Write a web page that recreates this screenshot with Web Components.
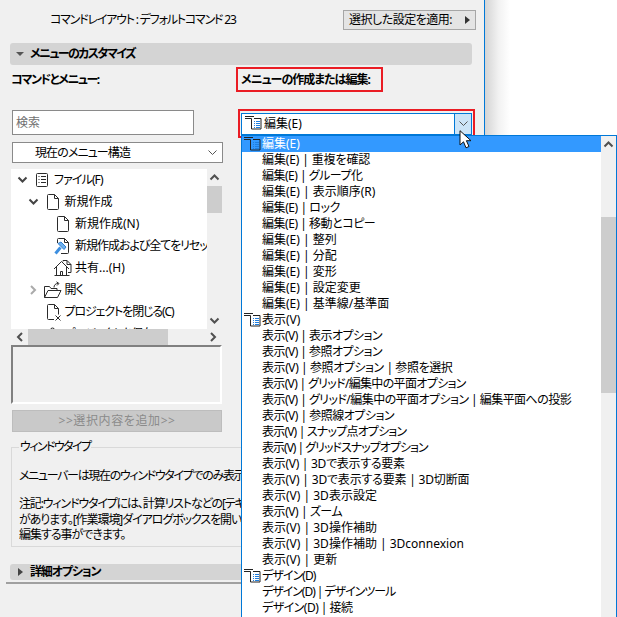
<!DOCTYPE html>
<html lang="ja">
<head>
<meta charset="utf-8">
<title>メニューのカスタマイズ</title>
<style>
html,body{margin:0;padding:0;background:#fff;overflow:hidden}
body{font:12px/16px "Noto Sans","Noto Sans CJK JP",sans-serif;color:#000;font-feature-settings:"palt"}
</style>
</head>
<body>
<x-app></x-app>
<script>
const FONT = `"Noto Sans","Noto Sans CJK JP",sans-serif`;
/* The reference face has narrower kana: tighten a line in proportion to its kana. */
function fit(text){
  const t = text.trim(), n = (t.match(/[\u3040-\u30ff]/g)||[]).length;
  return t.length ? (-1.6*n/t.length).toFixed(3)+'px' : '0';
}
const ICONS = {
  doc:`<svg width="14" height="18" viewBox="0 0 14 18" fill="none" stroke="#2b2b2b"><path d="M1.5 2.5a1 1 0 0 1 1-1h6l4 4v10a1 1 0 0 1-1 1h-9a1 1 0 0 1-1-1z"/><path d="M8.5 1.5v4h4"/></svg>`,
  list:`<svg width="14" height="16" viewBox="0 0 14 16" fill="none" stroke="#2b2b2b"><rect x="1.5" y="1.5" width="11" height="13" rx="1"/><path d="M3.5 4.5h1M6 4.5h5M3.5 7.5h1M6 7.5h5M3.5 10.5h1M6 10.5h5"/></svg>`,
  hammer:`<svg width="16" height="18" viewBox="0 0 16 18" fill="none" stroke="#2b2b2b"><path d="M3.5 6V2.5a1 1 0 0 1 1-1h6l4 4v10a1 1 0 0 1-1 1H7"/><path d="M10.500 1.500v4h4"/><path d="M1.500 16.500l5-6" stroke="#3d8fe0" stroke-width="3"/><path d="M4 6.500l3-1.500 5 5-2 2.500z" fill="#6fb1ee" stroke="#2f7fd0"/></svg>`,
  house:`<svg width="19" height="18" viewBox="0 0 19 18" fill="none" stroke="#2b2b2b"><path d="M10 2.500V1.500h4l4 4v8h-3"/><path d="M14 1.500v4h4"/><path d="M1 10L8.500 2.500 16 10"/><path d="M3.500 8v8.500h10V8"/><path d="M1.500 16.500h15M7.500 16.500v-4h2v4"/></svg>`,
  folder:`<svg width="20" height="18" viewBox="0 0 20 18" fill="none" stroke="#2b2b2b"><path d="M1.500 16.500v-11h5l1.500 2h6v2"/><path d="M1.500 16.500h13l3.500-7H5z"/><path d="M11 6.500c0-2.500 1.500-4 4-4"/><path d="M13.500.8l2.500 1.700-2 2"/></svg>`,
  close:`<svg width="16" height="18" viewBox="0 0 16 18" fill="none" stroke="#2b2b2b"><path d="M8 16.500H2.500a1 1 0 0 1-1-1v-13a1 1 0 0 1 1-1h6l4 4v6"/><path d="M8.500 1.500v4h4"/><path d="M9.500 12.500l5 5M14.500 12.500l-5 5"/></svg>`,
  save:`<svg width="14" height="18" viewBox="0 0 14 18" fill="none" stroke="#2b2b2b"><path d="M4.500 5a2 2 0 0 1 4 0"/></svg>`,
  group:`<svg width="18" height="15" viewBox="0 0 18 15" fill="none"><path d="M1 .5h9M1 2.500h6.500v10.500h9.500V2.500H10" stroke="#222"/><path d="M10 5.500h1M12 5.500h4M10 7.500h1M12 7.500h4M10 9.500h1M12 9.500h4M10 11.500h1M12 11.500h4" stroke="#1f7fe0"/></svg>`
};
const CHEV = (c,d) => `<svg width="11" height="8" viewBox="0 0 11 8" fill="none" stroke="${c}" stroke-width="${d||1}"><path d="M1.500 1.500l4 4 4-4"/></svg>`;

class Base extends HTMLElement {
  constructor(){ super(); this.attachShadow({mode:'open'}); }
  connectedCallback(){ this.shadowRoot.innerHTML = this.render(); }
}
function def(name, fn){ customElements.define(name, class extends Base { render(){ return fn(this); } }); }

def('x-bar', el => {
  const open = el.hasAttribute('open');
  return `<style>:host{display:flex;align-items:center;background:#d4d4d4;border-radius:3px;box-sizing:border-box;
    font-weight:700;height:var(--h,22px);margin:var(--m,0);white-space:nowrap}
    i{display:block;width:0;height:0}
    .o{margin-left:6px;margin-right:6px;border-left:4px solid transparent;border-right:4px solid transparent;border-top:4px solid #555}
    .c{margin-left:8px;margin-right:7px;border-top:4px solid transparent;border-bottom:4px solid transparent;border-left:5px solid #444}</style>
    <i class="${open?'o':'c'}"></i><slot></slot>`;
});
def('x-red', el => `<style>:host{display:flex;align-items:center;box-sizing:border-box;border:2px solid #ea1c24;height:var(--h);width:var(--w);margin:var(--m,0);padding:var(--p,0);white-space:nowrap}</style><slot></slot>`);
def('x-input', el => `<style>:host{display:flex;align-items:center;box-sizing:border-box;width:182px;height:25px;border:1px solid #8a8a8a;background:#fff;color:#6f6f6f;padding-left:3px;margin-left:1px}</style><slot></slot>`);
def('x-select', el => `<style>:host{display:flex;align-items:center;justify-content:space-between;box-sizing:border-box;width:211px;height:21px;border:1px solid #8a8a8a;background:#fff;padding:0 4px 0 22px;margin:7px 0 0 1px}</style><slot></slot>${CHEV('#555')}`);
def('x-combo', el => `<style>:host{display:flex;align-items:stretch;box-sizing:border-box;width:231px;height:22px;border:1px solid #0078d7;background:#fff;flex:none}
  .i{display:flex;align-items:center;padding-left:2px;width:20px;flex:none}
  .t{flex:1;display:flex;align-items:center}
  .b{width:16px;background:#cce4f7;border-left:1px solid #0078d7;display:flex;align-items:center;justify-content:center}</style>
  <span class="i">${ICONS.group}</span><span class="t"><slot></slot></span><span class="b">${CHEV('#555')}</span>`);
def('x-vscroll', el => `<style>:host{display:flex;flex-direction:column;flex:none;width:15px;background:#f0f0f0}
  .a{height:17px;display:flex;align-items:center;justify-content:center;flex:none}
  .u{transform:rotate(180deg)} .s{height:var(--before,0);flex:none} .t{height:var(--thumb);background:#cdcdcd;flex:none} .f{flex:1}</style>
  <span class="a u">${CHEV('#505050',2)}</span><span class="s"></span><span class="t"></span><span class="f"></span>
  ${el.hasAttribute('noend')?'':`<span class="a">${CHEV('#505050',2)}</span>`}`);
def('x-hscroll', el => `<style>:host{display:flex;height:16px;background:#f0f0f0;width:211px}
  .a{width:17px;display:flex;align-items:center;justify-content:center;flex:none}
  .l{transform:rotate(90deg)} .r{transform:rotate(-90deg)} .t{width:140px;background:#cdcdcd} .f{flex:1}</style>
  <span class="a l">${CHEV('#505050',2)}</span><span class="t"></span><span class="f"></span><span class="a r">${CHEV('#505050',2)}</span>`);
def('x-tree-row', el => {
  const lv = +el.getAttribute('level')||0, ch = el.getAttribute('chevron'), ic = el.getAttribute('icon');
  const shift = +el.getAttribute('shift')||0;
  const pad = 5 + lv*10.5;
  return `<style>:host{display:flex;align-items:center;height:22px;white-space:nowrap;padding-left:${pad}px;flex:none}
    .c{width:13px;display:flex;justify-content:center;flex:none}
    .i{width:${19+shift}px;margin-left:${6-shift}px;display:flex;justify-content:flex-start;align-items:center;flex:none}
    .r{transform:rotate(-90deg)}</style>
    <span class="c ${ch==='closed'?'r':''}">${ch? CHEV(ch==='closed'?'#aaa':'#444',2):''}</span>
    <span class="i">${ICONS[ic]||''}</span><slot></slot>`;
});
def('x-tree', el => `<style>:host{display:flex;flex-direction:column;width:211px;margin:6px 0 0}
  .m{display:flex;height:160px} .b{width:196px;background:#fff;overflow:hidden;display:flex;flex-direction:column}</style>
  <div class="m"><div class="b"><slot></slot></div><x-vscroll style="--thumb:27px"></x-vscroll></div><x-hscroll></x-hscroll>`);
def('x-sunken', el => `<style>:host{display:block;box-sizing:border-box;width:211px;height:59px;border:2px solid;border-color:#808080 #fff #fff #808080;background:#f0f0f0}</style>`);
def('x-add-button', el => `<style>:host{display:flex;align-items:center;justify-content:center;box-sizing:border-box;width:210px;height:22px;background:#c9c9c9;color:#8b8b8b;margin:6px 0 0 1px;border:1px solid #bdbdbd;letter-spacing:.6px}</style><slot></slot>`);
def('x-group', el => `<style>:host{display:block;margin:7px 12px 0 11px}
  fieldset{margin:0;border:1px solid #d9d9d9;padding:5px 8px 5px 7px;min-width:0;height:108px;box-sizing:border-box}
  legend{padding:0 1px;margin:0;line-height:16px;white-space:nowrap;letter-spacing:${fit(el.getAttribute('label'))}}
  .b{white-space:nowrap;width:222px;overflow:hidden}</style>
  <fieldset><legend>${el.getAttribute('label')}</legend><div class="b"><slot></slot></div></fieldset>`);
def('x-apply', el => `<style>:host{display:flex;align-items:center;justify-content:space-between;box-sizing:border-box;width:133px;height:20px;background:#e4e4e4;border:1px solid #a6a6a6;padding:0 5px;white-space:nowrap}
  i{width:0;height:0;border-top:4px solid transparent;border-bottom:4px solid transparent;border-left:5px solid #333}</style><slot></slot><i></i>`);
def('x-menu-row', el => {
  const sel = el.hasAttribute('selected'), gr = el.hasAttribute('group');
  return `<style>:host{display:flex;align-items:center;height:16px;white-space:nowrap;flex:none;background:${sel?'#3399ff':'transparent'};color:${sel?'#fff':'#000'}}
    .i{width:20px;flex:none;display:flex;align-items:center;padding-left:1px;box-sizing:border-box}</style>
    <span class="i">${gr?ICONS.group:''}</span><slot></slot>`;
});
def('x-menu', el => `<style>:host{position:absolute;left:241px;top:135px;width:376px;height:482px;box-sizing:border-box;border:1px solid #0078d7;border-bottom:0;background:#fff;display:flex}
  .l{flex:1;overflow:hidden;display:flex;flex-direction:column;min-width:0}</style>
  <div class="l"><slot></slot></div><x-vscroll noend style="--before:64px;--thumb:176px"></x-vscroll>`);
def('x-cursor', el => `<style>:host{position:absolute;left:459px;top:130px;width:16px;height:20px;display:block}</style>
  <svg width="16" height="20" viewBox="0 0 16 20"><path d="M1 .7V15l3.500-3.200 2.500 6 3-1.300-2.600-5.800H12z" fill="#fff" stroke="#111" stroke-linejoin="round"/></svg>`);

const MENU = [
 ['編集(E)','gs'],['編集(E) | 重複を確認'],['編集(E) | グループ化'],['編集(E) | 表示順序(R)'],['編集(E) | ロック'],['編集(E) | 移動とコピー'],['編集(E) | 整列'],['編集(E) | 分配'],['編集(E) | 変形'],['編集(E) | 設定変更'],['編集(E) | 基準線/基準面'],
 ['表示(V)','g'],['表示(V) | 表示オプション'],['表示(V) | 参照オプション'],['表示(V) | 参照オプション | 参照を選択'],['表示(V) | グリッド/編集中の平面オプション'],['表示(V) | グリッド/編集中の平面オプション | 編集平面への投影'],['表示(V) | 参照線オプション'],['表示(V) | スナップ点オプション'],['表示(V) | グリッドスナップオプション'],['表示(V) | 3Dで表示する要素'],['表示(V) | 3Dで表示する要素 | 3D切断面'],['表示(V) | 3D表示設定'],['表示(V) | ズーム'],['表示(V) | 3D操作補助'],['表示(V) | 3D操作補助 | 3Dconnexion'],['表示(V) | 更新'],
 ['デザイン(D)','g'],['デザイン(D) | デザインツール'],['デザイン(D) | 接続']
];
const menuHtml = MENU.map(([t,f='']) => `<x-menu-row fit ${f.includes('g')?'group':''} ${f.includes('s')?'selected':''}>${t}</x-menu-row>`).join('');

customElements.define('x-app', class extends HTMLElement {
  constructor(){ super(); this.attachShadow({mode:'open'}); }
  connectedCallback(){
    this.shadowRoot.innerHTML = `<style>
      :host{display:flex;position:relative;width:617px;height:617px;overflow:hidden;background:#fff;
        font:12px/16px ${FONT};font-feature-settings:"palt";color:#000}
      .dlg{width:485px;height:617px;box-sizing:border-box;flex:none;background:#f0f0f0;border-right:1px solid #0078d7;overflow:hidden}
      .shade{width:25px;height:617px;background:linear-gradient(90deg,#d4d4d4,#f2f2f2 55%,#fff)}
      .top{display:flex;align-items:center;justify-content:space-between;height:20px;padding:10px 8px 13px 50px;white-space:nowrap}
      .cols{display:flex}
      .left{width:225px;margin-left:11px;flex:none}
      .right{flex:none}
      .lab{font-weight:700;white-space:nowrap}
      .l1{height:28px;box-sizing:border-box;padding-top:1px;display:flex;align-items:center;margin-bottom:17px}
      .rule{height:2px;background:#a0a0a0;margin:2px 0 0 6px}
      .p1{margin-top:8px}
      .p2{margin-top:12px}
      .ln{height:15.5px;line-height:15.5px}
    </style>
    <div class="dlg">
      <div class="top"><span fit>コマンドレイアウト : デフォルトコマンド 23</span><x-apply fit>選択した設定を適用:</x-apply></div>
      <x-bar fit open style="--m:0 12px 0 10px">メニューのカスタマイズ</x-bar>
      <div class="cols">
        <div class="left">
          <div fit class="lab l1">コマンドとメニュー:</div>
          <x-input>検索</x-input>
          <x-select fit>現在のメニュー構造</x-select>
          <x-tree>
            <x-tree-row fit chevron="open" icon="list">ファイル(F)</x-tree-row>
            <x-tree-row fit level="1" chevron="open" icon="doc">新規作成</x-tree-row>
            <x-tree-row fit level="2" icon="doc">新規作成(N)</x-tree-row>
            <x-tree-row fit level="2" icon="hammer" shift="2">新規作成および全てをリセット</x-tree-row>
            <x-tree-row fit level="2" icon="house" shift="3">共有...(H)</x-tree-row>
            <x-tree-row fit level="1" chevron="closed" icon="folder" shift="3">開く</x-tree-row>
            <x-tree-row fit level="1" icon="close">プロジェクトを閉じる(C)</x-tree-row>
            <x-tree-row fit level="1" icon="save">プロジェクトを保存</x-tree-row>
          </x-tree>
          <x-sunken></x-sunken>
          <x-add-button>&gt;&gt;選択内容を追加&gt;&gt;</x-add-button>
        </div>
        <div class="right">
          <x-red fit class="lab" style="--h:25px;--w:147px;--m:2px 0 17px 0;--p:0 0 0 3px">メニューの作成または編集:</x-red>
          <x-red style="--h:29px;--w:237px;--m:0 0 0 2px;--p:0 0 0 1px"><x-combo>編集(E)</x-combo></x-red>
        </div>
      </div>
      <x-group label="ウィンドウタイプ">
        <div fit class="p1">メニューバーは現在のウィンドウタイプでのみ表示</div>
        <div class="p2">
          <div fit class="ln">注記:ウィンドウタイプには、計算リストなどの[テキ</div>
          <div fit class="ln">があります。[作業環境]ダイアログボックスを開い</div>
          <div fit class="ln">編集する事ができます。</div>
        </div>
      </x-group>
      <x-bar fit style="--h:16px;--m:17px 12px 0 10px">詳細オプション</x-bar>
      <div class="rule"></div>
    </div>
    <div class="shade"></div>
    <x-menu>${menuHtml}</x-menu>
    <x-cursor></x-cursor>`;
    this.shadowRoot.querySelectorAll('[fit]').forEach(e => { e.style.letterSpacing = fit(e.textContent); });
  }
});
</script>
</body>
</html>
